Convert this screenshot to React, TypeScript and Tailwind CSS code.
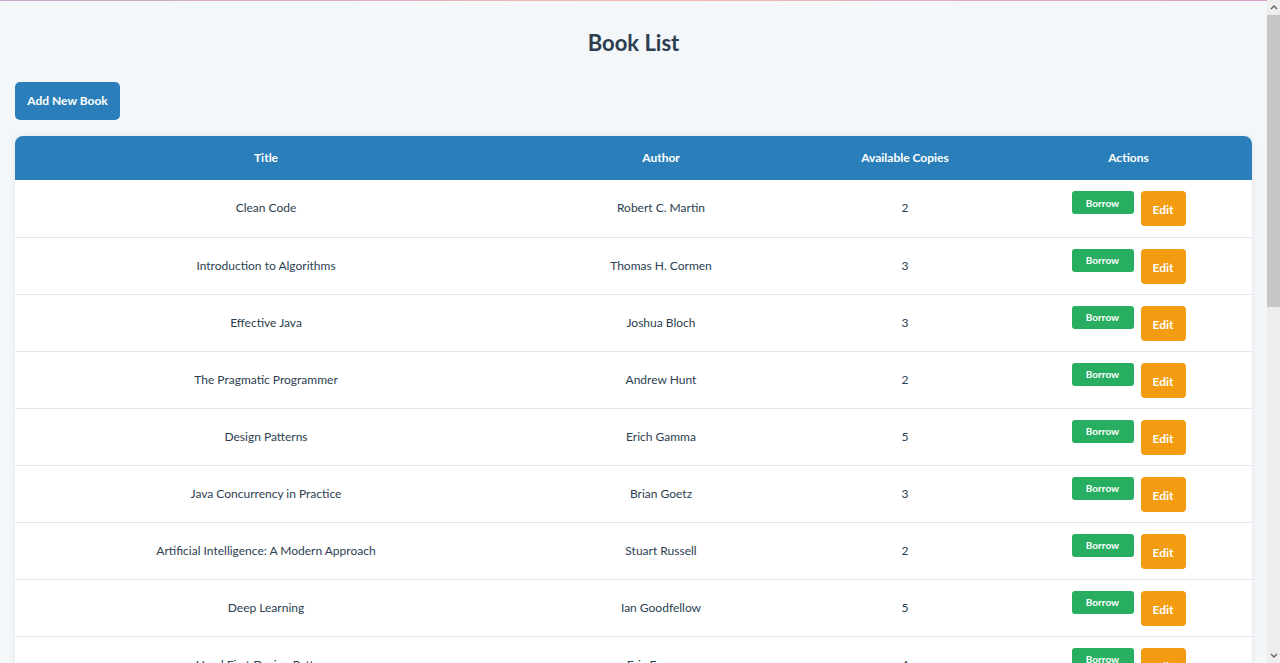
const books = [
  { title: "Clean Code", author: "Robert C. Martin", copies: 2 },
  { title: "Introduction to Algorithms", author: "Thomas H. Cormen", copies: 3 },
  { title: "Effective Java", author: "Joshua Bloch", copies: 3 },
  { title: "The Pragmatic Programmer", author: "Andrew Hunt", copies: 2 },
  { title: "Design Patterns", author: "Erich Gamma", copies: 5 },
  { title: "Java Concurrency in Practice", author: "Brian Goetz", copies: 3 },
  { title: "Artificial Intelligence: A Modern Approach", author: "Stuart Russell", copies: 2 },
  { title: "Deep Learning", author: "Ian Goodfellow", copies: 5 },
  { title: "Head First Design Patterns", author: "Eric Freeman", copies: 4 },
];

function BookRow({ book }: { book: (typeof books)[number] }) {
  return (
    <tr className="h-[57px] border-b border-[#e3e6ea] bg-white">
      <td className="px-3 text-center">{book.title}</td>
      <td className="px-3 text-center">{book.author}</td>
      <td className="px-3 text-center">{book.copies}</td>
      <td className="px-3 align-top pt-[11px]">
        <div className="flex items-start justify-center gap-[7px]">
          <button className="h-[23px] w-[62px] rounded-[3px] bg-[#27ae60] text-[10px] font-bold leading-[22px] text-white">
            Borrow
          </button>
          <button className="h-[35px] w-[45px] rounded-[4px] bg-[#f39c12] pt-[3px] text-[12px] font-bold text-white">
            Edit
          </button>
        </div>
      </td>
    </tr>
  );
}

// stand-in for the browser's own scrollbar in the screenshot
function Scrollbar() {
  return (
    <div className="flex w-[13px] shrink-0 flex-col bg-[#eeeeee]">
      <div className="flex h-[15px] items-center justify-center">
        <svg width="8" height="5" viewBox="0 0 8 5">
          <path d="M1 4 L4 1 L7 4" fill="none" stroke="#606060" strokeWidth="1.4" />
        </svg>
      </div>
      <div className="h-[292px] bg-[#c6c6c6]" />
      <div className="flex-1" />
      <div className="flex h-[15px] items-center justify-center">
        <svg width="8" height="5" viewBox="0 0 8 5">
          <path d="M1 1 L4 4 L7 1" fill="none" stroke="#606060" strokeWidth="1.4" />
        </svg>
      </div>
    </div>
  );
}

export default function App() {
  return (
    <div
      className="flex h-screen overflow-hidden bg-[#f4f7fa] text-[12px] text-[#2c3e50]"
      style={{ fontFamily: "Lato, 'Noto Sans', sans-serif" }}
    >
      <div className="min-w-0 flex-1 overflow-hidden">
        <div className="h-px w-full bg-gradient-to-r from-[#c9a3c9] via-[#f2b8b0] to-[#d9a0c8]" />
        <div className="px-[15px] pt-[27px]">
          <h1 className="text-center text-[22px] font-bold leading-[30px] text-[#2c3e50]">Book List</h1>
          <button className="mt-[24px] h-[38px] w-[105px] rounded-[5px] bg-[#2a7fba] text-[12px] font-bold text-white">
            Add New Book
          </button>
          <div className="mt-[16px] overflow-hidden rounded-t-[8px] bg-white shadow-[0_0_6px_rgba(0,0,0,0.08)]">
            <table className="w-full table-fixed border-collapse">
              <colgroup>
                <col className="w-[502px]" />
                <col className="w-[288px]" />
                <col className="w-[200px]" />
                <col className="w-[247px]" />
              </colgroup>
              <thead>
                <tr className="h-[44px] bg-[#2a7fba] text-white">
                  <th className="px-3 text-center font-bold">Title</th>
                  <th className="px-3 text-center font-bold">Author</th>
                  <th className="px-3 text-center font-bold">Available Copies</th>
                  <th className="px-3 text-center font-bold">Actions</th>
                </tr>
              </thead>
              <tbody>
                {books.map((b) => (
                  <BookRow key={b.title} book={b} />
                ))}
              </tbody>
            </table>
          </div>
        </div>
      </div>
      <Scrollbar />
    </div>
  );
}
